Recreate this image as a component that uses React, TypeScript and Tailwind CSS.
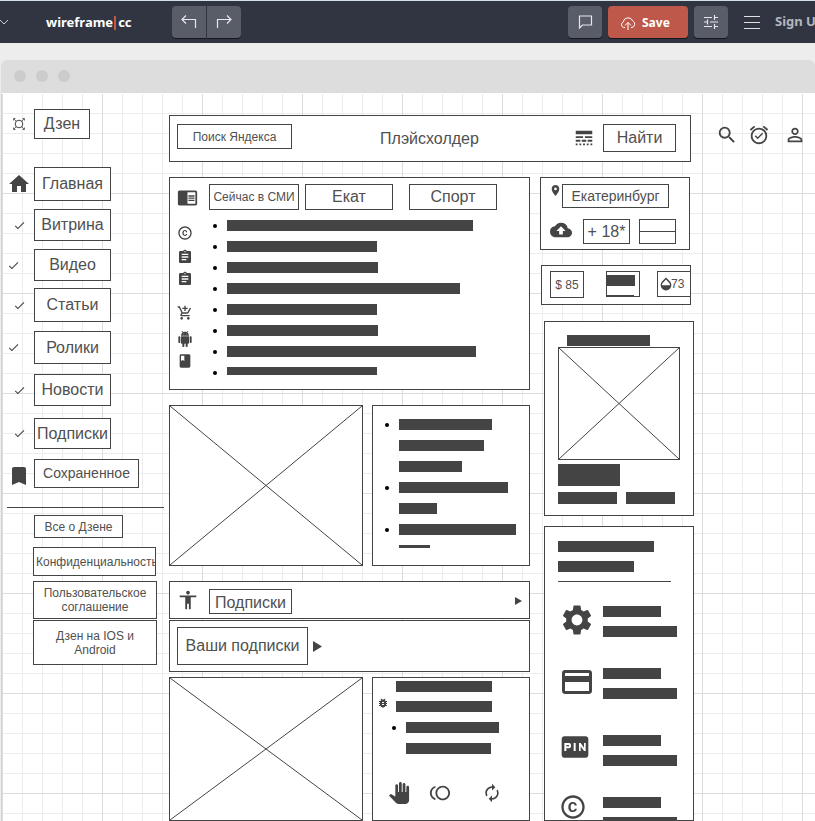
import type { ReactNode } from "react";
import {
  MdAccessibility,
  MdAddShoppingCart,
  MdAlarmOn,
  MdAssignment,
  MdAutorenew,
  MdBackup,
  MdBook,
  MdBookmark,
  MdBugReport,
  MdCheck,
  MdChromeReaderMode,
  MdCopyright,
  MdFiberPin,
  MdHome,
  MdLineStyle,
  MdLocationOn,
  MdOpacity,
  MdPanTool,
  MdPayment,
  MdPersonOutline,
  MdSearch,
  MdSettings,
  MdToll,
} from "react-icons/md";

const box = "border border-[#444] bg-white";
const label = `${box} flex items-center justify-center whitespace-nowrap text-[#505050]`;

function Bar({ className }: { className: string }) {
  return <div className={`bg-[#444] ${className}`} />;
}

function Dot({ hidden = false }: { hidden?: boolean }) {
  return <span className={`size-1 shrink-0 rounded-full ${hidden ? "" : "bg-black"}`} />;
}

function ImageBox({ className }: { className: string }) {
  return (
    <div className={`${box} ${className}`}>
      <svg className="block h-full w-full" stroke="#444" strokeWidth="1" aria-hidden="true">
        <line x1="0" y1="0" x2="100%" y2="100%" />
        <line x1="100%" y1="0" x2="0" y2="100%" />
      </svg>
    </div>
  );
}

function ZenMark() {
  return (
    <svg width="12" height="12" viewBox="0 0 12 12" fill="none" stroke="#444" aria-hidden="true">
      <circle cx="6" cy="6" r="3.8" />
      <path d="M.5 2.500V.5h2M9.500 .5h2v2M11.500 9.500v2h-2M2.500 11.500h-2v-2M1 1l2.300 2.300M11 1L8.700 3.300M11 11L8.700 8.700M1 11l2.300-2.300" strokeWidth=".8" />
    </svg>
  );
}

function Robot({ className }: { className: string }) {
  return (
    <svg width="16" height="16" viewBox="0 0 24 24" fill="currentColor" className={className} aria-hidden="true">
      <path d="M6 18c0 .55.45 1 1 1h1v3.500c0 .83.67 1.500 1.500 1.500s1.500-.67 1.500-1.500V19h2v3.500c0 .83.67 1.500 1.500 1.500s1.500-.67 1.500-1.500V19h1c.55 0 1-.45 1-1V8H6v10zM3.500 8C2.670 8 2 8.670 2 9.500v7c0 .83.67 1.500 1.500 1.500S5 17.330 5 16.500v-7C5 8.670 4.330 8 3.500 8zm17 0c-.83 0-1.500.67-1.500 1.500v7c0 .83.67 1.500 1.500 1.500s1.500-.67 1.500-1.500v-7c0-.83-.67-1.500-1.500-1.500zm-4.970-5.840l1.300-1.300c.2-.2.2-.51 0-.71-.2-.2-.51-.2-.71 0l-1.480 1.480C13.850 1.230 12.950 1 12 1c-.96 0-1.860.23-2.660.63L7.850.15c-.2-.2-.51-.2-.71 0-.2.2-.2.51 0 .71l1.310 1.310C6.970 3.260 6 5.010 6 7h12c0-1.990-.97-3.750-2.470-4.840zM10 5H9V4h1v1zm5 0h-1V4h1v1z" />
    </svg>
  );
}

function Triangle({ className }: { className: string }) {
  return (
    <svg className={className} viewBox="0 0 10 12" preserveAspectRatio="none" fill="#444" aria-hidden="true">
      <path d="M0 0l10 6-10 6z" />
    </svg>
  );
}

function Toolbar() {
  const tool = "flex h-8 items-center justify-center bg-[#595d68] text-[#e6e8eb] shadow-[0_1px_0_#16181e]";
  return (
    <header className="flex h-[43px] shrink-0 items-center overflow-hidden border-t border-[#d3e0e4] bg-[#303541] font-['Noto_Sans',sans-serif]">
      <button type="button" aria-label="Open list" className="w-[9px] shrink-0 text-[#c9ccd2]">
        <svg width="9" height="8" viewBox="0 0 9 8" fill="none" stroke="currentColor">
          <path d="M0 2l4 4 4-4" />
        </svg>
      </button>
      <a href="#" className="ml-[37px] flex w-[87px] items-center pt-px text-[13px] font-bold text-white">
        wireframe<span className="mr-0.5 ml-px h-[14px] w-0.5 bg-[#c4574a]" />cc
      </a>
      <div className="ml-[39px] flex gap-px">
        <button type="button" aria-label="Undo" className={`${tool} w-[34px] rounded-l`}>
          <svg width="16" height="14" viewBox="0 0 16 14" fill="none" stroke="currentColor" strokeWidth="1.200">
            <path d="M5 .5l-4 4 4 4M1 4.500h13.500V13" />
          </svg>
        </button>
        <button type="button" aria-label="Redo" className={`${tool} w-[34px] rounded-r`}>
          <svg width="16" height="14" viewBox="0 0 16 14" fill="none" stroke="currentColor" strokeWidth="1.200">
            <path d="M11 .5l4 4-4 4M15 4.500H1.500V13" />
          </svg>
        </button>
      </div>
      <div className="ml-auto flex items-center gap-1.5">
        <button type="button" aria-label="Comments" className={`${tool} w-[34px] rounded`}>
          <svg width="15" height="14" viewBox="0 0 15 14" fill="none" stroke="currentColor" strokeWidth="1.200">
            <path d="M1.500 1h12v9H4.500l-3 3z" />
          </svg>
        </button>
        <button type="button" className="flex h-8 w-20 items-center gap-1.5 rounded bg-[#be584a] pt-px pl-3 text-[12px] font-bold text-white shadow-[0_1px_0_#16181e]">
          <svg width="16" height="14" viewBox="0 0 16 14" fill="none" stroke="currentColor">
            <path d="M5 11.500H3.500a3 3 0 0 1-.3-5.500A5 5 0 0 1 12.800 5a3.500 3.500 0 0 1-.8 6.500h-1M8 14V6.500M5 9.500l3-3 3 3" />
          </svg>
          Save
        </button>
        <button type="button" aria-label="Settings" className={`${tool} w-[34px] rounded`}>
          <svg width="14" height="16" viewBox="0 0 14 16" fill="none" stroke="currentColor" strokeWidth="1.200">
            <path d="M0 3.500h8M10.500 3.500H14M10.500 1v5M0 8h3.500M6 8h8M3.500 5.500v5M0 12.500h8M10.500 12.500H14M10.500 10v5" />
          </svg>
        </button>
      </div>
      <button type="button" aria-label="Menu" className="ml-4 flex w-4 shrink-0 flex-col gap-1">
        <span className="h-px w-full bg-[#dfe1e5]" />
        <span className="my-px h-px w-full bg-[#dfe1e5]" />
        <span className="h-px w-full bg-[#dfe1e5]" />
      </button>
      <a href="#" className="ml-[15px] w-10 shrink-0 whitespace-nowrap text-[13px] font-bold text-[#b4b7bd]">
        Sign Up
      </a>
    </header>
  );
}

function NavRow({ icon, shift = false, className, children }: { icon?: ReactNode; shift?: boolean; className: string; children: ReactNode }) {
  return (
    <li className="flex items-center">
      <span className={`flex w-8 shrink-0 items-center ${shift ? "pl-[5px]" : "justify-center pl-0.5"}`}>{icon}</span>
      <a href="#" className={`${label} ${className}`}>
        {children}
      </a>
    </li>
  );
}

function SideNav() {
  const check = <MdCheck size={13} />;
  return (
    <nav className="w-[162px] shrink-0 pt-[15px]">
      <ul>
        <NavRow icon={<ZenMark />} className="h-[30px] w-14">Дзен</NavRow>
      </ul>
      <ul className="mt-7">
        <NavRow icon={<MdHome size={24} />} className="h-[34px] w-[77px]">Главная</NavRow>
      </ul>
      <ul className="mt-2 flex flex-col gap-2">
        <NavRow icon={check} className="h-8 w-[77px]">Витрина</NavRow>
        <NavRow icon={check} shift className="h-8 w-[77px]">Видео</NavRow>
      </ul>
      <ul className="mt-[7px] flex flex-col gap-[9px]">
        <NavRow icon={check} className="h-[34px] w-[77px]">Статьи</NavRow>
        <NavRow icon={check} shift className="h-[33px] w-[77px]">Ролики</NavRow>
      </ul>
      <ul className="mt-[10px] flex flex-col">
        <NavRow icon={check} className="h-8 w-[77px]">Новости</NavRow>
      </ul>
      <ul className="mt-3 flex flex-col gap-[10px]">
        <NavRow icon={check} className="h-[31px] w-[77px]">Подписки</NavRow>
        <NavRow icon={<MdBookmark size={24} className="mt-1" />} className="h-[29px] w-[105px] text-[14px]">Сохраненное</NavRow>
      </ul>
      <hr className="mt-[19px] ml-[5px] border-[#444]" />
      <ul className="mt-[7px] ml-[31px] text-[12px] leading-[14px] text-[#505050]">
        <li className="ml-px">
          <a href="#" className={`${label} h-[23px] w-[89px]`}>Все о Дзене</a>
        </li>
        <li className="mt-[9px]">
          <a href="#" className={`${box} flex h-[29px] w-[123px] items-center overflow-hidden pl-0.5 whitespace-nowrap`}>Конфиденциальность</a>
        </li>
        <li className="mt-[5px]">
          <a href="#" className={`${box} flex h-[38px] w-[124px] items-center justify-center px-4 text-center`}>Пользовательское соглашение</a>
        </li>
        <li className="mt-px">
          <a href="#" className={`${box} flex h-[45px] w-[124px] items-center justify-center px-5 text-center`}>Дзен на IOS и Android</a>
        </li>
      </ul>
    </nav>
  );
}

function SearchPanel() {
  return (
    <form className={`${box} mr-[3px] flex h-[47px] items-start pt-2 pr-[14px] pl-[7px]`} onSubmit={(e) => e.preventDefault()}>
      <label htmlFor="query" className={`${label} h-[25px] w-[115px] text-[12px]`}>Поиск Яндекса</label>
      <input id="query" type="text" placeholder="Плэйсхолдер" className="h-[30px] min-w-0 flex-1 pr-1.5 text-center outline-none placeholder:text-[#505050]" />
      <MdLineStyle size={22} className="mt-[3px] mr-2" />
      <button type="submit" className={`${label} h-7 w-[73px]`}>Найти</button>
    </form>
  );
}

const newsBars = ["w-[246px]", "w-[150px]", "w-[151px]", "w-[233px]", "w-[150px]", "w-[151px]", "w-[249px]", "w-[150px]"];

function NewsPanel() {
  return (
    <section className={`${box} h-[213px] pt-1.5 pl-[7px]`}>
      <div className="flex items-center">
        <MdChromeReaderMode size={21} />
        <button type="button" className={`${label} ml-[11px] h-[26px] w-[90px] text-[12px]`}>Сейчас в СМИ</button>
        <button type="button" className={`${label} ml-1.5 h-[26px] w-[88px]`}>Екат</button>
        <button type="button" className={`${label} ml-4 h-[26px] w-[88px]`}>Спорт</button>
      </div>
      <div className="flex gap-5">
        <div className="flex w-4 flex-col pt-[15px]">
          <MdCopyright size={16} />
          <MdAssignment size={16} className="mt-2" />
          <MdAssignment size={16} className="mt-1.5" />
          <MdAddShoppingCart size={16} className="mt-[18px]" />
          <Robot className="mt-[10px]" />
          <MdBook size={16} className="mt-1.5" />
        </div>
        <ul className="flex flex-col gap-[10px] pt-[10px]">
          {newsBars.map((width, i) => (
            <li key={i} className="flex h-[11px] items-center gap-[10px]">
              <Dot />
              <Bar className={`${width} ${i === newsBars.length - 1 ? "h-2 self-start" : "h-[11px]"}`} />
            </li>
          ))}
        </ul>
      </div>
    </section>
  );
}

const topicBars = [
  { width: "w-[93px]", dot: true },
  { width: "w-[85px]", dot: false },
  { width: "w-[63px]", dot: false },
  { width: "w-[109px]", dot: true },
  { width: "w-[38px]", dot: false },
  { width: "w-[117px]", dot: true },
];

function TopicPanel() {
  return (
    <section className={`${box} w-[158px] pt-[13px] pl-3`}>
      <ul className="flex flex-col gap-[10px]">
        {topicBars.map((bar, i) => (
          <li key={i} className="flex items-center gap-[10px]">
            <Dot hidden={!bar.dot} />
            <Bar className={`h-[11px] ${bar.width}`} />
          </li>
        ))}
      </ul>
      <Bar className="mt-[10px] ml-[14px] h-[3px] w-[31px]" />
    </section>
  );
}

function ActionPanel() {
  return (
    <section className={`${box} w-[158px] pt-[3px]`}>
      <Bar className="ml-[23px] h-[11px] w-24" />
      <div className="mt-[9px] flex h-[11px] pl-1">
        <MdBugReport size={12} className="-mt-1" />
        <Bar className="ml-[7px] h-[11px] w-24" />
      </div>
      <div className="mt-[10px] flex items-center gap-[10px] pl-[19px]">
        <Dot />
        <Bar className="h-[11px] w-[93px]" />
      </div>
      <Bar className="mt-[10px] ml-[33px] h-[11px] w-[85px]" />
      <div className="mt-7 flex items-center pl-[15px]">
        <MdPanTool size={22} />
        <MdToll size={22} className="ml-[19px]" />
        <MdAutorenew size={20} className="ml-[31px]" />
      </div>
    </section>
  );
}

function CityPanel() {
  return (
    <section className={`${box} h-[73px] w-[150px] pt-1.5 pl-2`}>
      <div className="flex items-start">
        <MdLocationOn size={13} />
        <span className={`${label} h-6 w-[107px] text-[14px]`}>Екатеринбург</span>
      </div>
      <div className="mt-[11px] flex items-start pl-px">
        <MdBackup size={22} />
        <span className={`${label} ml-[11px] h-[25px] w-[47px]`}>+ 18*</span>
        <div className={`${box} ml-[9px] h-[25px] w-[37px] pt-[11px]`}>
          <Bar className="h-px w-full" />
        </div>
      </div>
    </section>
  );
}

function RatesPanel() {
  return (
    <section className={`${box} ml-px flex h-10 w-[150px] items-start pt-[5px] pl-2 text-[12px] text-[#505050]`}>
      <span className={`${label} h-[27px] w-[34px]`}>$ 85</span>
      <div className={`${box} ml-[22px] flex h-[26px] w-[34px] flex-col justify-between pt-[3px]`}>
        <Bar className="h-[11px] w-7" />
        <Bar className="h-px w-[27px]" />
      </div>
      <span className="ml-[17px] flex h-[26px] flex-1 items-center border-y border-l border-[#444] leading-none">
        <MdOpacity size={16} className="-mr-[3px] text-[#444]" />
        73
      </span>
    </section>
  );
}

function CardPanel() {
  return (
    <section className={`${box} ml-1 h-[195px] w-[150px] pt-[13px] pl-[13px]`}>
      <Bar className="ml-[9px] h-[11px] w-[83px]" />
      <ImageBox className="mt-px h-[113px] w-[122px]" />
      <Bar className="mt-1 h-[22px] w-[62px]" />
      <div className="mt-1.5 flex gap-[9px]">
        <Bar className="h-3 w-[59px]" />
        <Bar className="h-3 w-[49px]" />
      </div>
    </section>
  );
}

function ServiceRow({ icon, className }: { icon: ReactNode; className: string }) {
  return (
    <li className={`flex h-[31px] items-start ${className}`}>
      <span className="-mt-1 flex w-[45px] shrink-0 pl-px">{icon}</span>
      <div className="flex flex-col gap-[9px]">
        <Bar className="h-[11px] w-[58px]" />
        <Bar className="h-[11px] w-[74px]" />
      </div>
    </li>
  );
}

function ServicePanel() {
  return (
    <section className={`${box} ml-1 h-[295px] w-[150px] overflow-hidden pt-[14px] pl-[13px]`}>
      <Bar className="h-[11px] w-24" />
      <Bar className="mt-[9px] h-[11px] w-[76px]" />
      <Bar className="mt-[9px] h-px w-[113px]" />
      <ul className="pt-6">
        <ServiceRow icon={<MdSettings size={36} />} className="" />
        <ServiceRow icon={<MdPayment size={36} />} className="mt-[31px]" />
        <ServiceRow icon={<MdFiberPin size={32} />} className="mt-9" />
        <ServiceRow icon={<MdCopyright size={28} />} className="mt-[31px]" />
      </ul>
    </section>
  );
}

export default function App() {
  return (
    <div className="flex min-h-screen flex-col bg-[#ededed]">
      <Toolbar />
      <div className="mt-[17px] ml-px flex flex-1 flex-col">
        <div className="flex h-[33px] shrink-0 items-center gap-[10px] rounded-t-md bg-[#ddd] pb-0.5 pl-[13px]">
          <span className="size-3 rounded-full bg-[#ccc]" />
          <span className="size-3 rounded-full bg-[#ccc]" />
          <span className="size-3 rounded-full bg-[#ccc]" />
        </div>
        <div className="flex flex-1 items-start border-t border-l border-t-white border-l-[#d4d4d4] bg-white bg-[linear-gradient(#dcdcdc_1px,transparent_1px),linear-gradient(90deg,#dcdcdc_1px,transparent_1px),linear-gradient(#ececec_1px,transparent_1px),linear-gradient(90deg,#ececec_1px,transparent_1px)] bg-[size:100px_100px,100px_100px,20px_20px,20px_20px] bg-[position:0_-1px] bg-clip-padding font-['Liberation_Sans',Arial,sans-serif] text-[16px] text-[#444]">
          <SideNav />
          <main className="ml-[5px] min-w-0 flex-1 pt-[21px]">
            <SearchPanel />
            <div className="mt-[15px] flex gap-[10px]">
              <div className="flex min-w-0 flex-1 flex-col">
                <NewsPanel />
                <div className="mt-[15px] flex h-[161px] gap-[9px]">
                  <ImageBox className="min-w-0 flex-1" />
                  <TopicPanel />
                </div>
                <section className={`${box} mt-[15px] flex h-[38px] items-start px-[7px] pt-[7px]`}>
                  <MdAccessibility size={22} />
                  <h2 className={`${label} ml-[10px] h-[25px] w-[83px] pt-0.5`}>Подписки</h2>
                  <Triangle className="mt-2 ml-auto h-2 w-[7px]" />
                </section>
                <section className={`${box} mt-px flex h-[52px] items-center gap-[5px] pl-[7px]`}>
                  <h2 className={`${label} h-[38px] w-[131px]`}>Ваши подписки</h2>
                  <Triangle className="h-[11px] w-[9px]" />
                </section>
                <div className="mt-[5px] flex h-36 gap-[9px]">
                  <ImageBox className="min-w-0 flex-1" />
                  <ActionPanel />
                </div>
              </div>
              <aside className="flex w-[154px] shrink-0 flex-col">
                <CityPanel />
                <div className="mt-[15px]">
                  <RatesPanel />
                </div>
                <div className="mt-4">
                  <CardPanel />
                </div>
                <div className="mt-[10px]">
                  <ServicePanel />
                </div>
              </aside>
            </div>
          </main>
          <div className="flex w-[121px] shrink-0 items-center pt-[30px] pl-[22px]">
            <MdSearch size={22} />
            <MdAlarmOn size={22} className="ml-[10px]" />
            <MdPersonOutline size={22} className="ml-[14px]" />
          </div>
        </div>
      </div>
    </div>
  );
}
